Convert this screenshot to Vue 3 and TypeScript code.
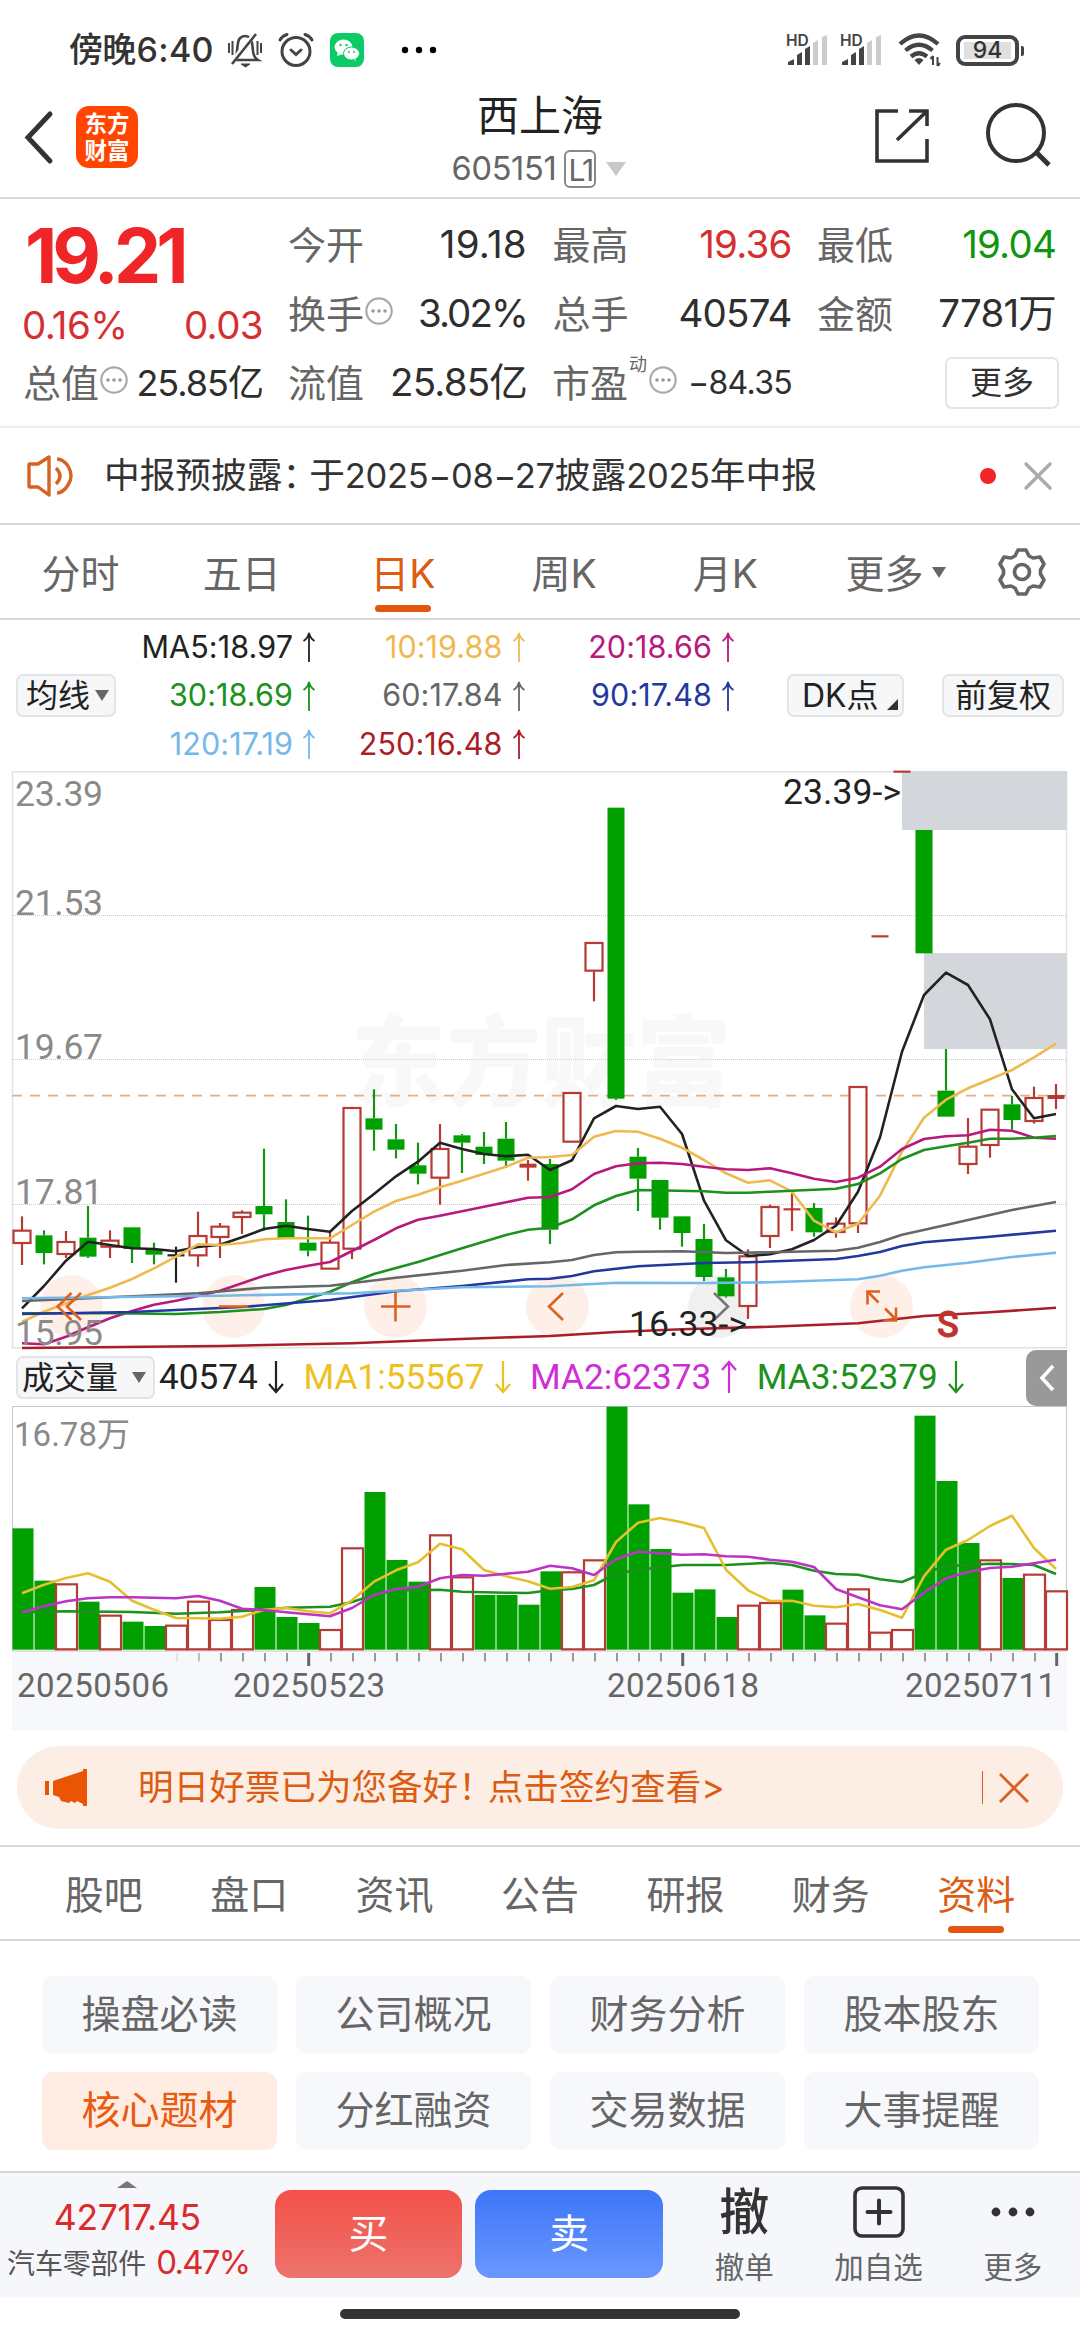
<script setup lang="ts">
type Point = [index: number, offset: number]
type Kind = 'up' | 'down' | 'flat'
type Candle = [kind: Kind, top: number, bottom: number, high: number, low: number]

const STEP = 22
const cx = (i: number): number => 22 + i * STEP

// Chart offsets are stored in thirds of a pixel.
const ky = (v: number): number => 279 + v / 3
const vy = (v: number): number => (v - 49) / 3

const pathOf = (pts: Point[], y: (v: number) => number): string =>
  pts.map(([i, v]) => `${cx(i)},${y(v).toFixed(1)}`).join(' ')
const series = (values: number[]): Point[] => values.map((v, i) => [i, v])

interface Fact { label: string; value: string; tone: string; info?: boolean }
const quoteRows: Fact[][] = [
  [
    { label: '今开', value: '19.18', tone: 'dark loose' },
    { label: '最高', value: '19.36', tone: 'red' },
    { label: '最低', value: '19.04', tone: 'green' },
  ],
  [
    { label: '换手', value: '3.02%', tone: 'dark tight', info: true },
    { label: '总手', value: '40574', tone: 'dark' },
    { label: '金额', value: '7781万', tone: 'dark' },
  ],
]

const maLegend = [
  { text: 'MA5:18.97', color: '#222' },
  { text: '10:19.88', color: '#efb94f' },
  { text: '20:18.66', color: '#b81a7c' },
  { text: '30:18.69', color: '#1c911c' },
  { text: '60:17.84', color: '#666' },
  { text: '90:17.48', color: '#23389f' },
  { text: '120:17.19', color: '#74b9ea' },
  { text: '250:16.48', color: '#ab1e28' },
]

const periods = ['分时', '五日', '日K', '周K', '月K', '更多']
const infoTabs = ['股吧', '盘口', '资讯', '公告', '研报', '财务', '资料']
const chips = ['操盘必读', '公司概况', '财务分析', '股本股东', '核心题材', '分红融资', '交易数据', '大事提醒']

const candles: Candle[] = [
  ['up', 542, 579, 499, 645], ['down', 556, 609, 541, 643], ['up', 576, 612, 543, 624],
  ['down', 563, 620, 468, 624], ['up', 572, 590, 541, 624], ['down', 532, 597, 532, 639],
  ['down', 597, 614, 578, 643], ['flat', 616, 616, 590, 698], ['up', 558, 616, 485, 650],
  ['up', 530, 561, 519, 624], ['up', 488, 501, 481, 552], ['down', 468, 493, 296, 542],
  ['down', 516, 564, 448, 564], ['down', 578, 602, 497, 619], ['up', 578, 656, 545, 656],
  ['up', 174, 596, 174, 627], ['down', 205, 239, 118, 302], ['down', 268, 299, 222, 325],
  ['down', 346, 371, 278, 403], ['up', 297, 383, 222, 464], ['down', 256, 278, 252, 369],
  ['down', 290, 315, 246, 342], ['down', 266, 332, 216, 352], ['up', 345, 349, 330, 392],
  ['down', 342, 539, 327, 582], ['up', 129, 275, 129, 275], ['up', -321, -238, -321, -146],
  ['down', -727, 146, -727, 150], ['down', 320, 386, 294, 483], ['down', 390, 503, 390, 539],
  ['down', 499, 549, 499, 590], ['down', 567, 681, 522, 693], ['down', 682, 739, 657, 743],
  ['up', 619, 768, 598, 807], ['up', 471, 558, 464, 594], ['up', 478, 478, 430, 543],
  ['down', 474, 547, 459, 560], ['up', 521, 546, 502, 563], ['up', 111, 520, 111, 549],
  ['up', -341, -341, -341, -341], ['up', -835, -835, -835, -835], ['down', -660, -290, -660, -290],
  ['down', 122, 200, -3, 200], ['up', 290, 342, 204, 372], ['up', 179, 285, 179, 323],
  ['down', 163, 210, 138, 239], ['up', 144, 213, 110, 221], ['up', 139, 143, 102, 177],
]

const priceLines: { color: string; points: Point[] }[] = [
  { color: '#222', points: series([
    775, 708, 632, 575, 585, 595, 597, 604, 591, 584, 562, 537, 527, 537, 545, 483, 432, 379, 335, 278, 297, 312, 319, 314,
    360, 331, 205, 168, 177, 170, 252, 452, 571, 618, 613, 598, 570, 527, 425, 262, 5, -165, -232, -195, -92, 118, 205, 192]) },
  { color: '#efb94f', points: series([
    815, 785, 760, 735, 713, 687, 655, 620, 583, 585, 579, 568, 565, 565, 565, 525, 485, 453, 434, 412, 392, 371, 350, 323,
    321, 315, 260, 243, 245, 266, 293, 330, 370, 398, 391, 425, 512, 547, 521, 437, 305, 203, 149, 115, 88, 60, 22, -19]) },
  { color: '#b81a7c', points: series([
    880, 883, 860, 832, 805, 783, 764, 752, 738, 722, 700, 677, 660, 647, 636, 603, 570, 535, 509, 497, 484, 470, 457, 443,
    441, 418, 372, 349, 340, 338, 342, 350, 358, 360, 355, 370, 386, 396, 383, 350, 297, 267, 259, 256, 239, 242, 263, 266]) },
  { color: '#1c911c', points: [[0, 790], [4, 790], [7, 792], [9, 786], [11, 777], [12, 765], [14, 725], [15, 697], [16, 672],
    [18, 636], [20, 595], [22, 555], [23, 539], [24, 533], [25, 508], [26, 466], [27, 438], [28, 420], [31, 424], [32, 428],
    [33, 428], [34, 425], [37, 416], [38, 402], [39, 370], [40, 327], [41, 300], [42, 289], [43, 278], [44, 266], [45, 266],
    [46, 263], [47, 258]] },
  { color: '#666', points: [[0, 753], [3, 745], [8, 730], [11, 713], [14, 707], [17, 683], [20, 662], [22, 645], [24, 637],
    [25, 630], [26, 615], [27, 607], [28, 605], [30, 604], [32, 609], [34, 607], [37, 602], [38, 593], [39, 576], [40, 554],
    [42, 525], [45, 480], [47, 456]] },
  { color: '#23389f', points: [[0, 792], [5, 786], [10, 771], [14, 750], [17, 724], [20, 708], [23, 688], [24, 686], [25, 678],
    [26, 664], [28, 649], [31, 639], [33, 637], [37, 627], [38, 618], [39, 606], [40, 588], [41, 577], [44, 560], [47, 542]] },
  { color: '#74b9ea', points: [[0, 745], [9, 737], [15, 730], [20, 712], [24, 709], [27, 698], [31, 699], [34, 697], [38, 688],
    [39, 677], [40, 662], [41, 652], [43, 638], [45, 621], [47, 608]] },
  { color: '#ab1e28', points: [[0, 894], [9, 888], [15, 880], [19, 869], [23, 860], [24, 858], [27, 846], [30, 838], [34, 830],
    [38, 820], [41, 798], [44, 787], [47, 773]] },
]

const volumes = [
  416, 573, 584, 636, 678, 696, 709, 708, 636, 691, 661, 592, 682, 700, 721, 476, 307, 511, 576, 437, 563, 616, 616, 645,
  545, 548, 512, 51, 344, 478, 609, 599, 682, 648, 640, 600, 677, 702, 599, 729, 721, 78, 274, 460, 512, 565, 555, 605]
const hollow = new Set([2, 4, 7, 8, 9, 10, 14, 15, 19, 20, 25, 26, 33, 34, 37, 38, 39, 40, 44, 46, 47])

const volumeLines: { color: string; points: Point[] }[] = [
  { color: '#1c911c', points: [[0, 668], [2, 665], [5, 667], [7, 672], [9, 668], [11, 660], [12, 654], [14, 651], [15, 637],
    [16, 616], [17, 602], [18, 602], [19, 600], [20, 606], [22, 609], [23, 610], [24, 602], [25, 598], [26, 586], [27, 552],
    [28, 540], [30, 526], [32, 526], [34, 519], [35, 526], [36, 543], [37, 553], [38, 555], [39, 569], [40, 577], [41, 550],
    [42, 530], [44, 522], [45, 523], [46, 526], [47, 553]] },
  { color: '#e5bf2e', points: series([
    611, 585, 565, 551, 576, 633, 660, 685, 686, 687, 681, 660, 655, 665, 671, 632, 576, 542, 518, 462, 479, 541, 560, 575,
    597, 592, 572, 457, 399, 385, 398, 415, 540, 602, 634, 633, 648, 653, 643, 661, 684, 560, 480, 451, 409, 378, 475, 538]) },
  { color: '#bb34c4', points: series([
    668, 650, 635, 626, 623, 623, 624, 626, 619, 633, 657, 661, 668, 674, 680, 655, 616, 598, 591, 566, 556, 558, 552, 546,
    528, 536, 556, 509, 486, 491, 495, 494, 500, 501, 510, 516, 532, 598, 623, 647, 659, 609, 566, 547, 535, 531, 521, 510]) },
]

const volumeLegend = [
  { text: '40574', color: '#222', up: false },
  { text: 'MA1:55567', color: '#edc11f', up: false },
  { text: 'MA2:62373', color: '#cf2ed6', up: true },
  { text: 'MA3:52379', color: '#1c911c', up: false },
]

const priceLabels = [
  { text: '23.39', y: 35 },
  { text: '21.53', y: 143.5 },
  { text: '19.67', y: 288 },
  { text: '17.81', y: 432.7 },
  { text: '15.95', y: 573.7 },
]
const ticks = Array.from({ length: 41 }, (_, k) => k + 7)
const majorTicks = [13, 30, 47]
const tickOpacity = (i: number): number => (i === 7 ? 0.2 : i === 8 ? 0.6 : 1)
</script>

<template>
  <div class="screen">
    <div class="status">
      <span class="clock">傍晚<b>6:40</b></span>
      <svg class="bell" width="36" height="36" viewBox="0 0 36 36" fill="none" stroke="#444" stroke-width="2.6">
        <path d="M7 28 C10 25 10 20 10.500 14 C11 7 14 4 18 4 C22 4 25 7 25.500 14 C26 20 26 25 31 28 Z" />
        <path d="M27 3 L4 31" stroke="#fff" stroke-width="5" />
        <path d="M29 2 L5 32" />
        <path d="M2 11 V21 M5.500 9 V23 M34 11 V21 M30.500 9 V23" stroke-width="2" />
        <path d="M14 32 H23 L18.500 35 Z" fill="#444" stroke-width="1" />
      </svg>
      <svg class="alarm" width="36" height="36" viewBox="0 0 36 36" fill="none" stroke="#444" stroke-width="3" stroke-linecap="round">
        <circle cx="18" cy="19.500" r="14" />
        <path d="M2 8 Q4 4 9 2.500 M34 8 Q32 4 27 2.500 M13 18 L18 22.500 L23 18" />
      </svg>
      <svg class="wechat" width="36" height="36" viewBox="0 0 36 36">
        <rect x="1" y="1" width="34" height="34" rx="8" fill="#0acb66" />
        <ellipse cx="14.500" cy="15" rx="9" ry="7.500" fill="#fff" />
        <path d="M8 24 L9 19 L14 22 Z M27 29 L26 25 L23 27 Z" fill="#fff" />
        <ellipse cx="22.500" cy="21.500" rx="8" ry="6.500" fill="#fff" stroke="#0acb66" stroke-width="1" />
        <g fill="#0acb66">
          <circle cx="11.500" cy="13" r="1.200" /><circle cx="17.500" cy="13" r="1.200" />
          <circle cx="20" cy="20" r="1" /><circle cx="25" cy="20" r="1" />
        </g>
      </svg>
      <svg class="more-dots" width="36" height="10" viewBox="0 0 36 10">
        <circle cx="4" cy="5" r="3.200" /><circle cx="18" cy="5" r="3.200" /><circle cx="32" cy="5" r="3.200" />
      </svg>
      <span class="spacer"></span>
      <svg v-for="n in 2" :key="n" class="signal" width="42" height="34" viewBox="0 0 42 34">
        <text x="-1" y="12.500" class="hd">HD</text>
        <path fill="#444" d="M1 32 V29 L7 26 V32 Z M10 22 L15 19 V32 H10 Z M18 16 L23 13 V32 H18 Z" />
        <path fill="#ccc" d="M26 10 L31 7 V32 H26 Z M35 4 L40 2 V32 H35 Z" />
      </svg>
      <svg class="wifi" width="44" height="36" viewBox="0 0 44 36" fill="none" stroke="#444" stroke-width="4.200">
        <path d="M2 12 Q21 -5 40 12 M7.500 18.500 Q21 7 34.500 18.500 M13 24.500 Q21 18 29 24.500" />
        <path d="M21 33 L16.500 28 Q21 24 25.500 28 Z" fill="#444" stroke="none" />
        <path d="M35 24 V33 M32.500 27 L35 24 M39.500 25 V34 M42 31 L39.500 34" stroke-width="2" />
      </svg>
      <div class="battery"><span>94</span></div>
    </div>

    <header class="header">
      <svg class="back" width="30" height="54" viewBox="0 0 30 54" fill="none" stroke="#333" stroke-width="5" stroke-linecap="round">
        <path d="M26 4 L4 27.500 L26 51" />
      </svg>
      <div class="logo">东方<br />财富</div>
      <div class="title">
        <h1>西上海</h1>
        <div class="code">605151<em>L1</em><i class="tri code-tri"></i></div>
      </div>
      <svg class="share" width="56" height="56" viewBox="0 0 56 56" fill="none" stroke="#333" stroke-width="3.600">
        <path d="M24 3 H3 V53 H53 V31 M35 3 H53 V18 M53 3 L23 32" />
      </svg>
      <svg class="search" width="68" height="68" viewBox="0 0 68 68" fill="none" stroke="#333" stroke-width="4">
        <circle cx="32" cy="32" r="28" /><path d="M52 51 L65 64" stroke-width="5" />
      </svg>
    </header>

    <section class="quote">
      <div class="price">
        <strong>19.21</strong>
        <div class="change"><span>0.16%</span><span>0.03</span></div>
      </div>
      <div class="facts">
        <div v-for="(row, r) in quoteRows" :key="r" class="fact-row">
          <div v-for="f in row" :key="f.label" class="fact">
            <label>{{ f.label }}</label>
            <svg v-if="f.info" class="info" width="30" height="30" viewBox="0 0 30 30">
              <circle cx="15" cy="15" r="12.700" fill="none" stroke="#aaa" stroke-width="2.200" />
              <g fill="#999"><circle cx="9" cy="15" r="1.800" /><circle cx="15" cy="15" r="1.800" /><circle cx="21" cy="15" r="1.800" /></g>
            </svg>
            <span :class="f.tone">{{ f.value }}</span>
          </div>
        </div>
      </div>
      <div class="fact-row wide">
        <div class="fact">
          <label>总值</label>
          <svg class="info" width="30" height="30" viewBox="0 0 30 30">
            <circle cx="15" cy="15" r="12.700" fill="none" stroke="#aaa" stroke-width="2.200" />
            <g fill="#999"><circle cx="9" cy="15" r="1.800" /><circle cx="15" cy="15" r="1.800" /><circle cx="21" cy="15" r="1.800" /></g>
          </svg>
          <span class="dark cap">25.85亿</span>
        </div>
        <div class="fact"><label>流值</label><span class="dark">25.85亿</span></div>
        <div class="fact">
          <label>市盈</label><sup>动</sup>
          <svg class="info" width="30" height="30" viewBox="0 0 30 30">
            <circle cx="15" cy="15" r="12.700" fill="none" stroke="#aaa" stroke-width="2.200" />
            <g fill="#999"><circle cx="9" cy="15" r="1.800" /><circle cx="15" cy="15" r="1.800" /><circle cx="21" cy="15" r="1.800" /></g>
          </svg>
          <span class="dark pe">−84.35</span>
        </div>
        <div class="fact end"><button class="more">更多</button></div>
      </div>
    </section>

    <section class="notice">
      <svg width="48" height="42" viewBox="0 0 48 42" fill="none" stroke="#d8621f" stroke-width="3.400">
        <path d="M2 10 Q2 9 3 9 H11 L22 2 V40 L11 32 H3 Q2 32 2 31 Z" stroke-linejoin="round" />
        <path d="M29 13 Q37 21 29 29 M30 4 Q36 4 41 11 Q47 21 41 30 Q36 38 30 38" />
      </svg>
      <p>中报预披露<i class="colon">：</i>于<b>2025−08−27</b>披露<b>2025</b>年中报</p>
      <i class="dot"></i>
      <svg width="28" height="28" viewBox="0 0 28 28" stroke="#aaa" stroke-width="3.400" stroke-linecap="round">
        <path d="M2 2 L26 26 M26 2 L2 26" />
      </svg>
    </section>

    <nav class="periods">
      <a v-for="p in periods" :key="p" :class="{ on: p === '日K', last: p === '更多' }">{{ p }}<i v-if="p === '更多'" class="tri"></i></a>
      <svg class="gear" width="50" height="50" viewBox="0 0 50 50" fill="none" stroke="#666" stroke-width="3.600" stroke-linejoin="round">
        <path d="M21 3 H29 L32 9 L36 11 L43 10 L47 17 L43.500 23 V27 L47 33 L43 40 L36 39 L32 41 L29 47 H21 L18 41 L14 39 L7 40 L3 33 L6.500 27 V23 L3 17 L7 10 L14 11 L18 9 Z" />
        <circle cx="25" cy="25" r="7.500" />
      </svg>
    </nav>

    <section class="ma">
      <button class="pill line-pill">均线<i class="tri"></i></button>
      <div class="ma-grid">
        <span v-for="m in maLegend" :key="m.text" :style="{ color: m.color }">
          {{ m.text }}
          <svg width="14" height="32" viewBox="0 0 14 32" fill="none" stroke="currentColor" stroke-width="1.800">
            <path d="M7 31 V2 M1.500 10 Q6 7 7 2 Q8 7 12.500 10" />
          </svg>
        </span>
      </div>
      <button class="pill dk-pill">DK点<svg width="11" height="11" viewBox="0 0 11 11"><path d="M11 0 V11 H0 Z" fill="#333" /></svg></button>
      <button class="pill adj-pill">前复权</button>
    </section>

    <svg class="kline" width="1080" height="578" viewBox="0 0 1080 578">
      <text class="watermark" x="351" y="327" textLength="380" lengthAdjust="spacingAndGlyphs">东方财富</text>
      <rect x="12.500" y="0.750" width="1054" height="576" fill="none" stroke="#e2e2e2" stroke-width="1.500" />
      <path d="M13 144.500 H1066 M13 288.500 H1066 M13 433.500 H1066" stroke="#ccc" stroke-width="1" stroke-dasharray="1 1" />
      <path d="M12 324.700 H1066" stroke="#dfae8b" stroke-width="1.800" stroke-dasharray="10 8" />
      <g fill="#fef0e8">
        <circle cx="71.500" cy="535.500" r="31.500" /><circle cx="233.500" cy="535.500" r="31.500" />
        <circle cx="395.500" cy="535.500" r="31.500" /><circle cx="557.500" cy="535.500" r="31.500" />
        <circle cx="719.500" cy="535.500" r="31.500" fill="#f0f0f0" /><circle cx="881.500" cy="535.500" r="31.500" />
      </g>
      <path d="M902 0 H1067 V59 H902 Z M924 182 H1067 V278 H924 Z" fill="#d3d7dc" />
      <g v-for="(c, i) in candles" :key="i" :class="['candle', c[0]]">
        <path v-if="c[2] - c[1] < 6" :d="`M${cx(i) - 8.5} ${ky((c[1] + c[2]) / 2)} h17`" :class="{ thick: c[2] > c[1] }" />
        <rect v-else :x="cx(i) - 8.5" :y="ky(c[1])" width="17" :height="(c[2] - c[1]) / 3" />
        <path v-if="c[3] < c[1]" :d="`M${cx(i)} ${ky(c[3])} V${ky(c[1])}`" />
        <path v-if="c[4] > c[2]" :d="`M${cx(i)} ${ky(c[2])} V${ky(c[4])}`" />
      </g>
      <polyline v-for="l in priceLines" :key="l.color" :points="pathOf(l.points, ky)" fill="none" :stroke="l.color" stroke-width="2.600" stroke-linejoin="round" />
      <g fill="none" stroke="#dc621f" stroke-width="2.600">
        <path d="M71.500 522 L57.500 535.500 L71.500 549 M81 522 L67 535.500 L81 549" />
        <path d="M219 535.500 H248.500 M381 535.500 H410.500 M395.500 520.500 V550.500" />
        <path d="M563 522 L549 535.500 L563 549" />
        <path d="M714 522 L728 535.500 L714 549" stroke="#777" />
        <path d="M880 520.500 H867.500 V533.500 M867.500 520.500 L878.500 531.500 M885 537.500 L896 548.500 M896 536.500 V549.500 H883.500" />
      </g>
      <g class="axis-text">
        <text v-for="p in priceLabels" :key="p.text" x="15" :y="p.y" textLength="88">{{ p.text }}</text>
      </g>
      <g class="note-text">
        <text x="783" y="32.500" textLength="118">23.39-&gt;</text>
        <text x="629" y="564.500" textLength="118">16.33-&gt;</text>
        <text x="937" y="566" class="mark">S</text>
      </g>
    </svg>

    <section class="vol-head">
      <button class="pill vol-pill">成交量<i class="tri"></i></button>
      <span v-for="v in volumeLegend" :key="v.text" :style="{ color: v.color }">
        {{ v.text }}
        <svg width="18" height="34" viewBox="0 0 18 34" fill="none" stroke="currentColor" stroke-width="2.200">
          <path :d="v.up ? 'M9 33 V2 M2 10 L9 2 L16 10' : 'M9 1 V32 M2 24 L9 32 L16 24'" />
        </svg>
      </span>
      <button class="drawer">
        <svg width="16" height="28" viewBox="0 0 16 28" fill="none" stroke="#fff" stroke-width="3.600"><path d="M14 2 L3 14 L14 26" /></svg>
      </button>
    </section>

    <svg class="volume" width="1080" height="324" viewBox="0 0 1080 324">
      <rect x="12" y="245" width="1055" height="79" fill="#f7f8fb" />
      <rect x="12.500" y="0.500" width="1054" height="244.500" fill="none" stroke="#c8c8c8" />
      <text x="14" y="40" class="vol-max" textLength="116">16.78万</text>
      <template v-for="(v, i) in volumes" :key="i">
        <rect v-if="hollow.has(i)" :x="cx(i) - 10" :y="vy(v)" width="21" :height="vy(779) - vy(v)" fill="#fff" stroke="#b63a35" stroke-width="2.200" />
        <rect v-else :x="cx(i) - 9.5" :y="vy(v)" width="21" :height="vy(780) - vy(v)" fill="#00a000" />
      </template>
      <polyline v-for="l in volumeLines" :key="l.color" :points="pathOf(l.points, vy)" fill="none" :stroke="l.color" stroke-width="2.600" stroke-linejoin="round" />
      <g stroke="#999" stroke-width="2">
        <path v-for="i in ticks" :key="i" :d="`M${cx(i) + 1} 247 v8.500`" :opacity="tickOpacity(i)" />
        <path v-for="i in majorTicks" :key="`m${i}`" :d="`M${cx(i) + 0.7} 247 v13`" stroke="#666" stroke-width="3" />
      </g>
      <g class="dates">
        <text x="17" y="290.500" textLength="152">20250506</text>
        <text x="233" y="290.500" textLength="152">20250523</text>
        <text x="607" y="290.500" textLength="152">20250618</text>
        <text x="905" y="290.500" textLength="151">20250711</text>
      </g>
    </svg>

    <section class="banner">
      <svg width="42" height="38" viewBox="0 0 42 38" fill="#ea5504">
        <path d="M0 12 H4 V26 H0 Z M8 12 L38 2 V0 H42 V37 H38 V35 L32 32 L30 34 L26 32 L24 34 L16 32 L14 28 L8 26 Z" />
      </svg>
      <p>明日好票已为您备好<i class="bang">！</i>点击签约查看&gt;</p>
      <i class="bar"></i>
      <svg width="30" height="30" viewBox="0 0 30 30" stroke="#d8621f" stroke-width="2.800"><path d="M1 1 L29 29 M29 1 L1 29" /></svg>
    </section>

    <nav class="info-tabs">
      <a v-for="t in infoTabs" :key="t" :class="{ on: t === '资料' }">{{ t }}</a>
    </nav>

    <section class="chips">
      <button v-for="c in chips" :key="c" :class="{ on: c === '核心题材' }">{{ c }}</button>
    </section>

    <footer class="footer">
      <div class="sector">
        <i class="tri-up"></i>
        <strong>42717.45</strong>
        <p>汽车零部件<b>0.47%</b></p>
      </div>
      <button class="trade buy">买</button>
      <button class="trade sell">卖</button>
      <div class="action first"><span class="glyph">撤</span><small>撤单</small></div>
      <div class="action second">
        <span class="glyph">
          <svg width="52" height="52" viewBox="0 0 52 52" fill="none" stroke="#333" stroke-width="3.600">
            <rect x="2" y="2" width="48" height="48" rx="7" /><path d="M14.500 26 H37.500 M26 14.500 V37.500" stroke-width="4" stroke-linecap="round" />
          </svg>
        </span>
        <small>加自选</small>
      </div>
      <div class="action third">
        <span class="glyph">
          <svg width="44" height="10" viewBox="0 0 44 10" fill="#333"><circle cx="5" cy="5" r="4.400" /><circle cx="22" cy="5" r="4.400" /><circle cx="39" cy="5" r="4.400" /></svg>
        </span>
        <small>更多</small>
      </div>
    </footer>
    <div class="home"></div>
  </div>
</template>

<style>
body { background: #fff; }
</style>

<style scoped>
* { box-sizing: border-box; }
.screen {
  width: 1080px; height: 2340px; overflow: hidden; display: flex; flex-direction: column;
  background: #fff; color: #333; font-family: Inter, "Noto Sans CJK SC", sans-serif; line-height: 1;
}
.screen > * { flex: none; }
svg { display: block; flex: none; overflow: visible; }
button { border: 0; padding: 0; margin: 0; background: none; color: inherit; font: inherit; }
p, h1 { margin: 0; }
i, em { font-style: normal; }
.tri { display: inline-block; border: solid transparent; border-width: 11px 7px 0; border-top-color: #666; }

.status { height: 100px; display: flex; align-items: center; padding: 0 61px 0 69px; }
.clock { font-size: 34px; font-weight: 500; color: #333; white-space: nowrap; width: 142px; letter-spacing: -0.7px; }
.clock b { font-weight: 500; font-size: 34px; letter-spacing: 0.3px; margin-left: 1px; }
.bell { margin-left: 16px; }
.alarm { margin-left: 15px; }
.wechat { margin-left: 15px; }
.more-dots { margin-left: 36px; }
.spacer { flex: 1; }
.signal { margin-right: 12px; }
.signal + .wifi { margin-right: 14px; margin-left: 3px; }
.hd { font: 600 15.5px Inter, sans-serif; fill: #444; letter-spacing: 0; }
.battery {
  width: 63px; height: 31px; border: 4px solid #444; border-radius: 9px; position: relative;
  display: flex; align-items: center; justify-content: center;
  background: linear-gradient(#e0e0e0, #e0e0e0) center / 47px 17px no-repeat; font-size: 23px; font-weight: 500; color: #333;
}
.battery::after { content: ""; position: absolute; right: -9px; top: 7px; width: 3px; height: 10px; background: #444; border-radius: 0 2px 2px 0; }

.header { height: 99px; display: flex; align-items: flex-start; border-bottom: 2px solid #d8d8d8; }
.back { margin: 10px 0 0 24px; }
.logo {
  width: 62px; height: 62px; margin: 6px 0 0 22px; padding-top: 3px; border-radius: 13px; background: #ff4500; color: #fff;
  text-align: center; font: 700 22.5px/27px "Noto Sans CJK SC", sans-serif;
}
.title { flex: 1; display: flex; flex-direction: column; align-items: center; padding-left: 68px; }
.title h1 { font-size: 42px; font-weight: 400; line-height: 44px; margin-top: -6px; color: #222; }
.code { display: flex; align-items: center; height: 40px; margin-top: 11px; margin-left: -2px; font-size: 32.5px; color: #666; letter-spacing: -0.3px; }
.code em { border: 2px solid #888; border-radius: 6px; width: 32px; height: 38px; margin-left: 8px; font-size: 30px; line-height: 36px; text-align: center; letter-spacing: -2px; }
.code-tri { border-width: 14px 10px 0; border-top-color: #c8c8c8; margin-left: 10px; }
.share { margin: 8px 0 0; }
.search { margin: 1px 28px 0 54px; }

.quote { height: 229px; padding: 11px 24px 0; display: grid; grid-template-columns: 239px 1fr; column-gap: 26px; grid-template-rows: 138px 69px; border-bottom: 2px solid #eee; }
.price strong { display: block; font-size: 75px; font-weight: 700; color: #f02527; line-height: 92px; letter-spacing: -5px; margin-left: 1px; }
.change { display: flex; justify-content: space-between; font-size: 38.5px; color: #d5302f; line-height: 46px; letter-spacing: -0.6px; margin-left: -2px; }
.fact-row { display: grid; grid-template-columns: repeat(3, 238px); column-gap: 26.5px; }
.fact-row.wide { grid-column: 1 / 3; grid-template-columns: 239px 238px 239px 238px; column-gap: 26px; }
.fact { height: 69px; display: flex; align-items: center; color: #666; font-size: 38px; white-space: nowrap; margin-left: -1px; }
.fact span { margin-left: auto; font-size: 38.5px; letter-spacing: -0.8px; }
.fact .dark { color: #2e2e2e; }
.fact .red { color: #d5302f; }
.fact .green { color: #0f960f; }
.fact .loose { letter-spacing: 0.3px; }
.fact .tight { letter-spacing: -1.9px; }
.fact .cap { font-size: 36px; letter-spacing: -1px; }
.fact .pe { font-size: 32px; letter-spacing: -0.7px; }
.fact sup { font-size: 18px; align-self: flex-start; margin: 7px 0 0 1px; line-height: 20px; width: 19px; }
.info { margin-top: -6px; }
.end { justify-content: flex-end; }
.more { width: 114px; height: 52px; border: 2px solid #e4e4e4; border-radius: 7px; font-size: 32px; margin-right: -3px; color: #333; }

.notice { height: 97px; display: flex; align-items: center; padding: 0 28px 0 27px; border-bottom: 2px solid #d8d8d8; }
.notice p { flex: 1; margin-left: 29px; font-size: 35.7px; color: #333; white-space: nowrap; }
.notice b { font-weight: 400; font-size: 34.5px; letter-spacing: -0.3px; }
.colon { margin-right: -9px; }
.dot { width: 16px; height: 16px; border-radius: 50%; background: #f02527; margin-right: 28px; }

.periods { height: 95px; display: flex; align-items: center; border-bottom: 2px solid #d8d8d8; font-size: 39px; color: #666; }
.periods a { height: 93px; line-height: 97px; width: 161.200px; text-align: center; position: relative; white-space: nowrap; }
.periods a.last { width: 180px; }
.periods .tri { margin: 0 0 10px 9px; }
.gear { margin-left: 11px; }
.on { color: #dc5c14; }
.periods .on::after, .info-tabs .on::after {
  content: ""; position: absolute; left: 50%; width: 56px; height: 7px; margin-left: -28px; bottom: 6px; border-radius: 4px; background: #e2560f;
}

.ma { height: 151px; display: flex; align-items: center; padding-left: 16px; padding-right: 16px; }
.pill { height: 43px; border: 2px solid #e3e4e6; border-radius: 7px; background: #f6f7f9; color: #222; font-size: 32px; display: flex; align-items: center; white-space: nowrap; }
.line-pill { width: 100px; padding-left: 8px; }
.line-pill .tri { margin-left: 5px; }
.ma-grid { display: grid; grid-template-columns: 200px 209.500px 209.500px; grid-template-rows: repeat(3, 48.500px); width: 671px; align-content: center; font-size: 30.5px; letter-spacing: 0.1px; }
.ma-grid span { display: flex; align-items: center; justify-content: flex-end; }
.ma-grid svg { margin-left: 9px; }
.dk-pill { width: 117px; padding-left: 13px; }
.dk-pill svg { margin: 17px 0 0 8px; }
.adj-pill { width: 122px; margin-left: auto; justify-content: center; }

.kline text { font-family: Roboto, sans-serif; font-size: 35.5px; }
.kline .watermark { font: 900 98px "Noto Sans CJK SC", sans-serif; fill: #f8f8f8; }
.kline .axis-text { fill: #8a8a8a; }
.kline .note-text { fill: #222; }
.kline .mark { fill: #bf332c; font-size: 36px; font-weight: 500; stroke: #bf332c; stroke-width: 0.8px; }
.candle path { fill: none; stroke-width: 2.2px; }
.candle .thick { stroke-width: 4px; }
.up { fill: #fff; stroke: #b83a35; stroke-width: 2.2px; }
.down { fill: #00a000; stroke: none; }
.down path { stroke: #149414; }
.flat { stroke: #222; stroke-width: 2px; }

.vol-head { height: 57px; display: flex; align-items: center; padding: 0 13px 0 16px; font-family: Roboto, "Noto Sans CJK SC", sans-serif; font-size: 35.2px; }
.vol-head span { display: flex; align-items: center; white-space: nowrap; }
.vol-head span svg { margin-left: 9px; }
.vol-head span + span { margin-left: 18.5px; }
.vol-pill { width: 139px; padding-left: 4px; margin-right: 4px; font-family: inherit; }
.vol-pill .tri { margin-left: 14px; }
.drawer { width: 41px; height: 56px; margin-left: auto; border-radius: 10px 0 0 10px; background: #999; display: flex; align-items: center; justify-content: center; }
.vol-max { font: 33px Roboto, "Noto Sans CJK SC", sans-serif; fill: #8a8a8a; }
.dates text { font: 33px Roboto, sans-serif; fill: #666; }

.banner { height: 83px; margin: 16px 17px 16px; border-radius: 42px; background: #fceee5; color: #dc5c14; display: flex; align-items: center; padding: 0 34px 0 28px; }
.banner p { flex: 1; margin-left: 51px; font-size: 35.6px; white-space: nowrap; }
.bang { margin-right: -6px; }
.banner .bar { width: 1.500px; height: 33px; background: #dc5c14; margin-right: 16px; }

.info-tabs { height: 96px; border: solid #d8d8d8; border-width: 2px 0; padding: 0 31px; display: flex; color: #666; font-size: 39px; }
.info-tabs a { flex: 1; text-align: center; line-height: 96px; position: relative; }
.info-tabs .on { color: #dc5c14; }

.chips { height: 230px; padding: 35px 41px 0 42px; display: grid; grid-template-columns: repeat(4, 1fr); grid-auto-rows: 78px; gap: 18px 19px; align-content: start; }
.chips button { border-radius: 11px; background: #f7f8fb; color: #666; font-size: 39px; padding-bottom: 3px; }
.chips button.on { background: #ffede4; color: #ea5a10; }

.footer { height: 126px; border-top: 2px solid #d3d5d8; background: #f5f7fa; display: flex; align-items: flex-start; }
.sector { width: 255px; height: 124px; display: flex; flex-direction: column; align-items: center; padding-top: 8px; }
.tri-up { border: solid transparent; border-width: 0 10px 7px; border-bottom-color: #777; }
.sector strong { font-weight: 400; color: #db2b2b; font-size: 35.5px; line-height: 40px; margin-top: 10px; letter-spacing: -0.3px; }
.sector p { font-size: 28px; color: #555; white-space: nowrap; margin-top: 3px; line-height: 42px; letter-spacing: -0.2px; margin-left: 2px; }
.sector b { font-weight: 400; color: #db2b2b; font-size: 33px; margin-left: 10px; letter-spacing: -1.700px; }
.trade { width: 188px; height: 88px; border-radius: 16px; color: #fff; font-size: 40px; margin-top: 17px; }
.buy { background: linear-gradient(#f35149, #ec736c); margin-left: 20px; }
.sell { background: linear-gradient(#3d76f8, #6b97fe); margin-left: 13px; }
.action { display: flex; flex-direction: column; align-items: center; width: 134.5px; padding-top: 10px; color: #333; }
.action.first { margin-left: 14px; }
.glyph { height: 58px; display: flex; align-items: center; font-size: 50px; font-weight: 500; }
.action small { font-size: 29.500px; color: #666; margin-top: 12px; }
.home { width: 400px; height: 10px; border-radius: 5px; background: #333; margin: 12px 0 0 340px; }
</style>
